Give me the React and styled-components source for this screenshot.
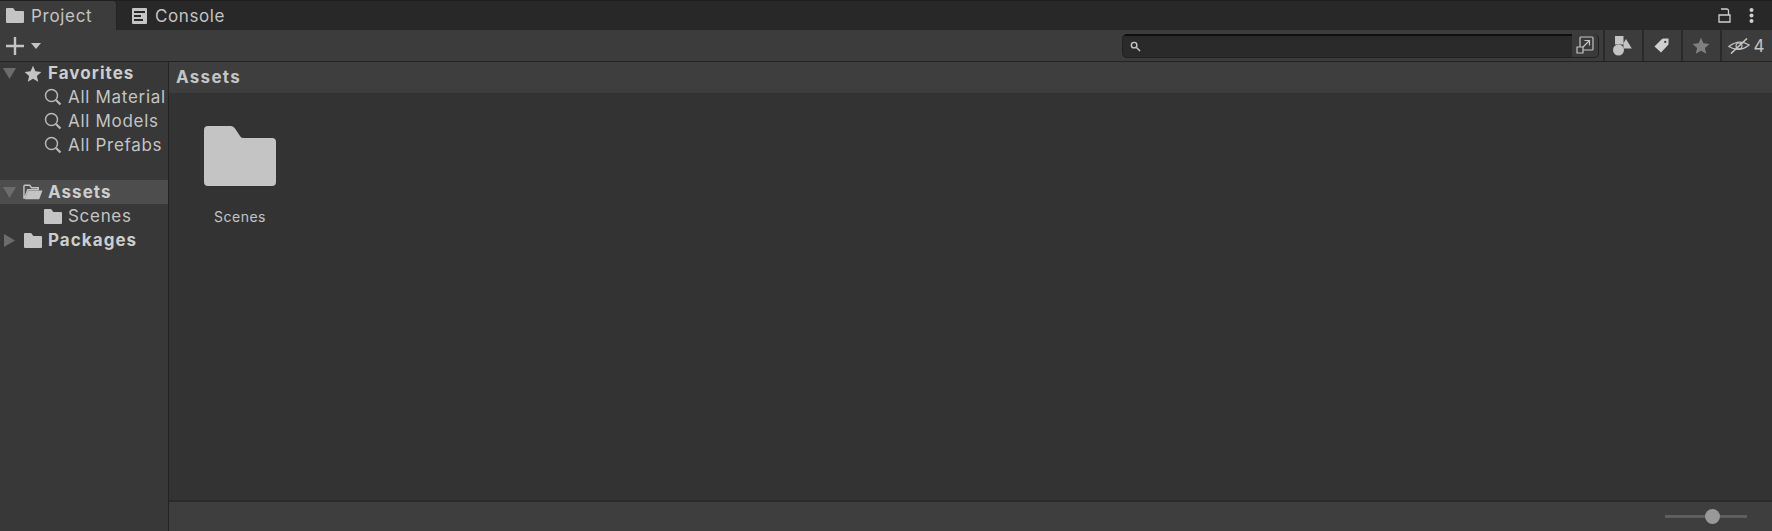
import React from "react";
import styled, { createGlobalStyle } from "styled-components";

const GlobalStyle = createGlobalStyle`
  html, body {
    margin: 0;
    padding: 0;
    background: #383838;
  }
  body {
    font-family: Inter, "Liberation Sans", sans-serif;
    color: #c4c4c4;
  }
`;

const Window = styled.div`
  width: 1772px;
  height: 531px;
  display: grid;
  grid-template-rows: 30px 32px 1fr;
  overflow: hidden;
`;

const TabBar = styled.div`
  display: flex;
  align-items: flex-end;
  background: #282828;
  border-top: 1px solid #1f1f1f;
  box-sizing: border-box;
  padding-right: 18px;
`;

const Tab = styled.div`
  height: 29px;
  box-sizing: border-box;
  display: flex;
  align-items: center;
  gap: ${(p) => p.$gap}px;
  font-size: 17px;
  letter-spacing: ${(p) => (p.$active ? 0.7 : 0.6)}px;
  color: #c4c4c4;
  width: ${(p) => p.$width}px;
  padding-left: ${(p) => p.$inset}px;
  background: ${(p) => (p.$active ? "#3c3c3c" : "transparent")};
  border-top-right-radius: ${(p) => (p.$active ? "4px" : "0")};
  border-right: ${(p) => (p.$active ? "1px solid #232323" : "none")};
`;

const TabActions = styled.div`
  margin-left: auto;
  height: 29px;
  display: flex;
  align-items: center;
  gap: 18px;
`;

const Toolbar = styled.div`
  display: flex;
  align-items: center;
  background: #3c3c3c;
  border-bottom: 1px solid #232323;
  box-sizing: border-box;
  padding-left: 6px;
`;

const AddButton = styled.div`
  display: flex;
  align-items: center;
  gap: 7px;
`;

const ToolbarRight = styled.div`
  margin-left: auto;
  display: flex;
  align-items: center;
  height: 100%;
`;

const SearchField = styled.div`
  width: 477px;
  height: 24px;
  box-sizing: border-box;
  display: flex;
  background: #2a2a2a;
  border: 1px solid #212121;
  border-top: none;
  border-radius: 5px;
  margin-right: 4px;
  overflow: hidden;
`;

const SearchInput = styled.div`
  flex: 1;
  display: flex;
  align-items: center;
  padding-left: 7px;
  border-top: 2px solid #0f0f0f;
`;

const SearchEnd = styled.div`
  width: 26px;
  background: #3a3a3a;
  display: flex;
  align-items: center;
  justify-content: center;
`;

const ToolButton = styled.div`
  height: 100%;
  width: ${(p) => p.$width}px;
  box-sizing: border-box;
  border-left: 2px solid #2a2a2a;
  padding-right: 2px;
  display: flex;
  align-items: center;
  justify-content: center;
  gap: 4px;
  font-size: 17px;
  color: #c4c4c4;
`;

const Body = styled.div`
  display: grid;
  grid-template-columns: 169px 1fr;
  min-height: 0;
`;

const Sidebar = styled.div`
  background: #383838;
  border-right: 1px solid #232323;
  overflow: hidden;
`;

const Row = styled.div`
  height: ${(p) => p.$height || 24}px;
  display: flex;
  align-items: center;
  white-space: nowrap;
  padding-left: ${(p) => (p.$depth ? 43 : 3)}px;
  margin-top: ${(p) => p.$gap || 0}px;
  background: ${(p) => (p.$selected ? "#4d4d4d" : "transparent")};
`;

const Arrow = styled.span`
  width: 20px;
  flex: none;
  display: flex;
  align-items: center;
`;

const RowIcon = styled.span`
  width: 20px;
  margin-right: 5px;
  flex: none;
  display: flex;
  align-items: center;
  justify-content: center;
`;

const RowLabel = styled.span`
  font-size: 17px;
  letter-spacing: ${(p) => (p.$bold ? 1.05 : 0.7)}px;
  font-weight: ${(p) => (p.$bold ? 700 : 400)};
  color: ${(p) => (p.$bold ? "#cdcdcd" : "#c4c4c4")};
  padding-bottom: ${(p) => (p.$bold ? 1 : 0)}px;
`;

const Main = styled.div`
  display: grid;
  grid-template-rows: 31px 1fr 31px;
  background: #333333;
  min-height: 0;
`;

const Breadcrumb = styled.div`
  background: #3e3e3e;
  display: flex;
  align-items: center;
  padding: 0 0 2px 7px;
  box-sizing: border-box;
  font-size: 17px;
  font-weight: 700;
  letter-spacing: 1.3px;
  color: #c4c4c4;
`;

const Grid = styled.div`
  padding: 33px 0 0 31px;
  display: flex;
  align-items: flex-start;
`;

const AssetTile = styled.div`
  width: 80px;
  display: flex;
  flex-direction: column;
  align-items: center;
  gap: 22px;
  font-size: 14px;
  letter-spacing: 0.5px;
  color: #c4c4c4;
`;

const Footer = styled.div`
  background: #3e3e3e;
  border-top: 2px solid #2a2a2a;
  box-sizing: border-box;
  display: flex;
  align-items: center;
  justify-content: flex-end;
  padding-right: 25px;
`;

const Slider = styled.div`
  width: 82px;
  height: 3px;
  background: #5e5e5e;
  position: relative;
`;

const Thumb = styled.div`
  position: absolute;
  top: -6px;
  left: 40px;
  width: 15px;
  height: 15px;
  border-radius: 50%;
  background: #999999;
`;

const FolderIcon = ({ size = 18, fill = "#c4c4c4" }) => (
  <svg width={size} height={(size * 60) / 72} viewBox="0 0 72 60">
    <path
      d="M4 0 H27 Q29.5 0 31 2.5 L36 10 Q37 12 39 12 H68 Q72 12 72 16 V56 Q72 60 68 60 H4 Q0 60 0 56 V4 Q0 0 4 0 Z"
      fill={fill}
    />
  </svg>
);

const OpenFolderIcon = () => (
  <svg width="21" height="16" viewBox="0 0 21 16">
    <path d="M1 15 V2 Q1 1 2 1 H7 L9 3.5 H16 V5.5 H5 L1.5 15" fill="none" stroke="#c4c4c4" strokeWidth="1.5" />
    <path d="M5.5 6.5 H20.5 L17 15.5 H2 Z" fill="#c4c4c4" />
  </svg>
);

const SearchIcon = () => (
  <svg width="18" height="18" viewBox="0 0 18 18" fill="none" stroke="#b8b8b8">
    <circle cx="7.5" cy="7.5" r="6" strokeWidth="1.5" />
    <path d="M12 12 L16.5 16.5" strokeWidth="2.2" />
  </svg>
);

const TinySearchIcon = () => (
  <svg width="11" height="11" viewBox="0 0 12 12" fill="none" stroke="#c4c4c4">
    <circle cx="4.5" cy="4.5" r="3" strokeWidth="1.6" />
    <path d="M7 7 L11 11" strokeWidth="1.6" />
  </svg>
);

const StarIcon = ({ size = 18, fill = "#c4c4c4" }) => (
  <svg width={size} height={size} viewBox="0 0 18 18">
    <path d="M9 0.8 L11.4 6.3 L17.4 6.9 L12.9 10.9 L14.2 16.8 L9 13.8 L3.8 16.8 L5.1 10.9 L0.6 6.9 L6.6 6.3 Z" fill={fill} />
  </svg>
);

const TriangleDown = () => (
  <svg width="13" height="11" viewBox="0 0 13 11">
    <path d="M0 0 H13 L6.5 11 Z" fill="#6c6c6c" />
  </svg>
);

const TriangleRight = () => (
  <svg width="12" height="13" viewBox="0 0 12 13">
    <path d="M1 0 L12 6.5 L1 13 Z" fill="#6c6c6c" />
  </svg>
);

const ConsoleIcon = () => (
  <svg width="15" height="16" viewBox="0 0 15 16">
    <path
      fillRule="evenodd"
      d="M1 0 H14 Q15 0 15 1 V15 Q15 16 14 16 H1 Q0 16 0 15 V1 Q0 0 1 0 Z M2 3 V5 H13 V3 Z M2 7 V9 H9 V7 Z M2 11 V13 H11 V11 Z"
      fill="#c4c4c4"
    />
  </svg>
);

const AddIcon = () => (
  <svg width="18" height="18" viewBox="0 0 18 18">
    <path d="M7.8 0 H10.2 V7.8 H18 V10.2 H10.2 V18 H7.8 V10.2 H0 V7.8 H7.8 Z" fill="#c4c4c4" />
  </svg>
);

const CaretIcon = () => (
  <svg width="10" height="6" viewBox="0 0 10 6">
    <path d="M0 0 H10 L5 6 Z" fill="#c4c4c4" />
  </svg>
);

const LockIcon = () => (
  <svg width="13" height="15" viewBox="0 0 13 15" fill="none" stroke="#d0d0d0" strokeWidth="1.3">
    <path d="M1 7 H12 V14 H1 Z" />
    <path d="M3 1 H9 Q10.5 1 10.5 3 V7" />
  </svg>
);

const MoreIcon = () => (
  <svg width="5" height="15" viewBox="0 0 5 15">
    <circle cx="2.5" cy="2" r="2" fill="#d0d0d0" />
    <circle cx="2.5" cy="7.5" r="2" fill="#d0d0d0" />
    <circle cx="2.5" cy="13" r="2" fill="#d0d0d0" />
  </svg>
);

const PopoutIcon = () => (
  <svg width="18" height="18" viewBox="0 0 18 18" fill="none" stroke="#c4c4c4" strokeWidth="1.2">
    <path d="M4 11 V2 Q4 1 5 1 H16 Q17 1 17 2 V13 Q17 14 16 14 H7" />
    <path d="M1 11 H7 V17 H1 Z" />
    <path d="M7 11 L13 5 M8.5 4.5 H13.5 V9.5" />
  </svg>
);

const TypeIcon = () => (
  <svg width="19" height="20" viewBox="0 0 19 20">
    <rect x="2" y="0" width="8.5" height="8.5" fill="#c4c4c4" />
    <path d="M13 3 L18.8 12.5 H10.5 V7 Z" fill="#c4c4c4" />
    <circle cx="5.5" cy="14" r="5.5" fill="#c4c4c4" />
  </svg>
);

const TagIcon = () => (
  <svg width="15" height="15" viewBox="0 0 16 16">
    <path
      fillRule="evenodd"
      d="M8.5 1 Q9 0.5 10 0.5 H15.5 V6 Q15.5 7 15 7.5 L7.5 15.5 L0.5 9 Z M12 3 A1.2 1.2 0 1 0 12 5.4 A1.2 1.2 0 1 0 12 3 Z"
      fill="#d0d0d0"
    />
  </svg>
);

const HiddenIcon = () => (
  <svg width="22" height="16" viewBox="0 0 22 16" fill="none" stroke="#c4c4c4" strokeWidth="1.1">
    <path d="M0.8 8.5 Q11 0.5 21.2 7 Q11 15 0.8 8.5 Z" />
    <circle cx="11" cy="8" r="3" />
    <path d="M3 15.5 L19 0.5" strokeWidth="1.6" />
  </svg>
);

// the narrow tree column clips this name in the reference
const favorites = ["All Material", "All Models", "All Prefabs"];

export default function App() {
  return (
    <Window>
      <GlobalStyle />
      <TabBar>
        <Tab $active $width={117} $inset={6} $gap={7}>
          <FolderIcon />
          Project
        </Tab>
        <Tab $width={130} $inset={15} $gap={8}>
          <ConsoleIcon />
          Console
        </Tab>
        <TabActions>
          <LockIcon />
          <MoreIcon />
        </TabActions>
      </TabBar>
      <Toolbar>
        <AddButton>
          <AddIcon />
          <CaretIcon />
        </AddButton>
        <ToolbarRight>
          <SearchField>
            <SearchInput>
              <TinySearchIcon />
            </SearchInput>
            <SearchEnd>
              <PopoutIcon />
            </SearchEnd>
          </SearchField>
          <ToolButton $width={39}>
            <TypeIcon />
          </ToolButton>
          <ToolButton $width={39}>
            <TagIcon />
          </ToolButton>
          <ToolButton $width={39}>
            <StarIcon fill="#808080" />
          </ToolButton>
          <ToolButton $width={52}>
            <HiddenIcon />
            4
          </ToolButton>
        </ToolbarRight>
      </Toolbar>
      <Body>
        <Sidebar>
          <Row $height={23}>
            <Arrow><TriangleDown /></Arrow>
            <RowIcon><StarIcon /></RowIcon>
            <RowLabel $bold>Favorites</RowLabel>
          </Row>
          {favorites.map((name) => (
            <Row $depth key={name}>
              <RowIcon><SearchIcon /></RowIcon>
              <RowLabel>{name}</RowLabel>
            </Row>
          ))}
          <Row $selected $gap={23}>
            <Arrow><TriangleDown /></Arrow>
            <RowIcon><OpenFolderIcon /></RowIcon>
            <RowLabel $bold>Assets</RowLabel>
          </Row>
          <Row $depth>
            <RowIcon><FolderIcon /></RowIcon>
            <RowLabel>Scenes</RowLabel>
          </Row>
          <Row>
            <Arrow><TriangleRight /></Arrow>
            <RowIcon><FolderIcon /></RowIcon>
            <RowLabel $bold>Packages</RowLabel>
          </Row>
        </Sidebar>
        <Main>
          <Breadcrumb>Assets</Breadcrumb>
          <Grid>
            <AssetTile>
              <FolderIcon size={72} />
              Scenes
            </AssetTile>
          </Grid>
          <Footer>
            <Slider>
              <Thumb />
            </Slider>
          </Footer>
        </Main>
      </Body>
    </Window>
  );
}
